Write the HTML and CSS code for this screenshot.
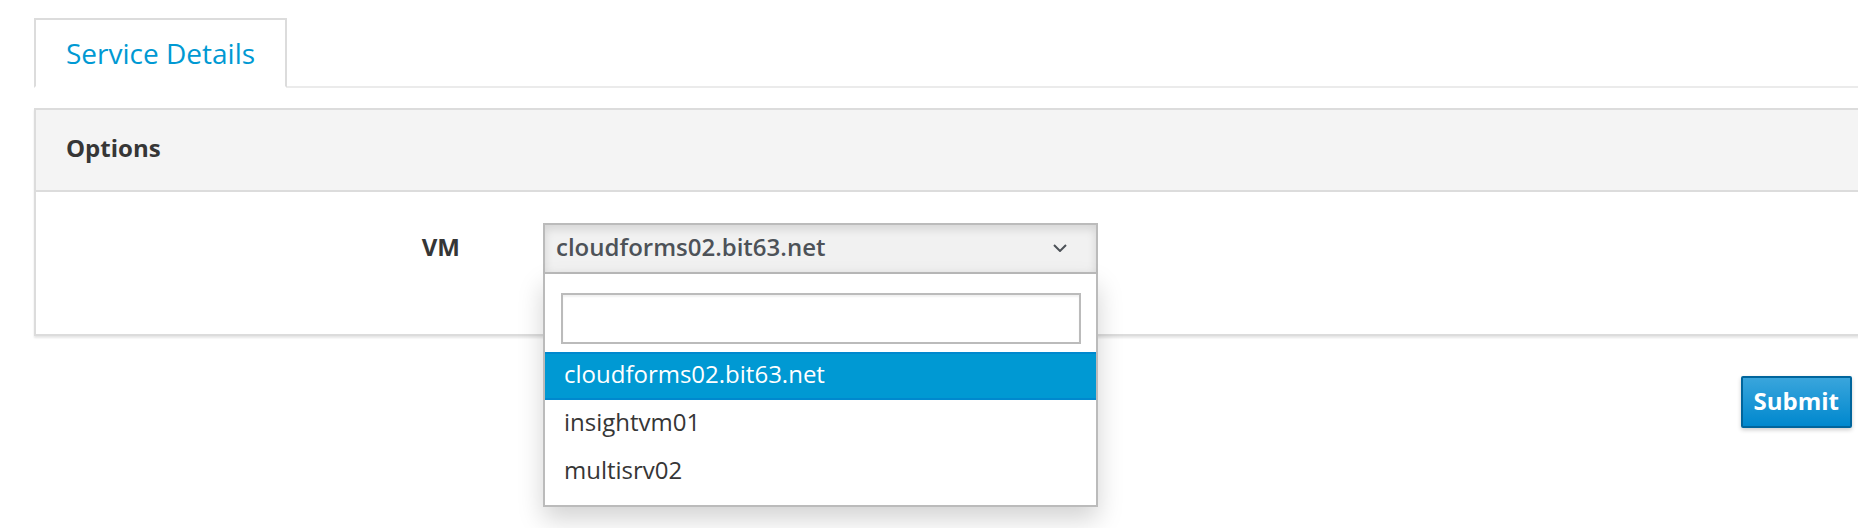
FILE: index.html
```html
<!DOCTYPE html>
<html lang="en">
<head>
<meta charset="utf-8">
<title>Service Details</title>
<link rel="stylesheet" href="styles.css">
</head>
<body>
<div class="page">
  <ul class="tabs">
    <li class="tab active"><a href="#">Service Details</a></li>
  </ul>

  <div class="panel">
    <div class="panel-heading"><h3 class="panel-title">Options</h3></div>
    <div class="panel-body">
      <div class="form-row">
        <label class="form-label">VM</label>
        <div class="select open">
          <button class="select-toggle" type="button">
            <span class="select-value">cloudforms02.bit63.net</span>
            <svg class="chevron" width="14" height="8" viewBox="0 0 14 8"><path d="M1 1 L7 7 L13 1" fill="none" stroke="#4d5258" stroke-width="2"/></svg>
          </button>
          <div class="select-menu">
            <div class="select-search"><input type="text" class="search-input"></div>
            <ul class="select-options">
              <li class="option selected">cloudforms02.bit63.net</li>
              <li class="option">insightvm01</li>
              <li class="option">multisrv02</li>
            </ul>
          </div>
        </div>
      </div>
    </div>
  </div>

  <div class="actions">
    <button class="btn-primary" type="button">Submit</button>
  </div>
</div>
</body>
</html>
```

FILE: styles.css
```css
html {
  overflow: hidden;
  background: #fff;
}

body {
  margin: 0;
  padding: 0;
  min-height: 528px;
  font-family: "Open Sans", "Liberation Sans", sans-serif;
  color: #363636;
  font-size: 24px;
}

.page {
  padding: 18px 0 0 34px;
}

/* Tabs */
.tabs {
  list-style: none;
  margin: 0 -40px 0 0;
  padding: 0;
  display: flex;
  border-bottom: 2px solid #ebebeb;
}

.tab {
  margin-bottom: -2px;
}

.tab a {
  display: block;
  padding: 13px 30px 13px 30px;
  font-size: 28px;
  line-height: 40px;
  color: #0099d3;
  text-decoration: none;
  border: 2px solid #dcdcdc;
  border-bottom-color: #fff;
  background: #fff;
}

/* Panel */
.panel {
  margin: 20px -40px 0 0;
  border: 2px solid #dcdcdc;
  background: #fff;
  box-shadow: 0 2px 2px rgba(3, 3, 3, 0.1);
}

.panel-heading {
  background: #f4f4f4;
  border-bottom: 2px solid #dcdcdc;
  padding: 22px 30px 26px;
}

.panel-title {
  margin: 0;
  font-size: 24px;
  line-height: 32px;
  font-weight: 700;
  color: #363636;
}

.panel-body {
  padding: 31px 0 60px;
}

.form-row {
  display: flex;
  align-items: baseline;
}

.form-label {
  width: 424px;
  margin-right: 83px;
  text-align: right;
  font-weight: 700;
  line-height: 32px;
  color: #363636;
}

/* Select */
.select {
  position: relative;
  width: 555px;
}

.select-toggle {
  display: flex;
  align-items: center;
  justify-content: space-between;
  width: 100%;
  box-sizing: border-box;
  margin: 0;
  padding: 6px 29px 9px 11px;
  border: 2px solid #bbb;
  background: #f1f1f1;
  box-shadow: inset 0 4px 10px rgba(3, 3, 3, 0.12);
  font-family: inherit;
  font-size: 24px;
  font-weight: 600;
  line-height: 32px;
  color: #4d5258;
  text-align: left;
}

.chevron {
  display: block;
  margin-top: 2px;
}

.select-menu {
  position: absolute;
  top: 100%;
  left: 0;
  right: 0;
  background: #fff;
  border: 2px solid #bbb;
  border-top: 0;
  padding-bottom: 9px;
  box-shadow: 0 12px 24px rgba(0, 0, 0, 0.175);
  z-index: 10;
}

.select-search {
  padding: 19px 15px 8px 16px;
}

.search-input {
  display: block;
  width: 100%;
  height: 51px;
  box-sizing: border-box;
  margin: 0;
  border: 2px solid #bbb;
  background: #fff;
  box-shadow: inset 0 2px 2px rgba(3, 3, 3, 0.06);
  font-family: inherit;
  font-size: 24px;
  outline: none;
}

.select-options {
  list-style: none;
  margin: 0;
  padding: 0;
}

.option {
  padding: 6px 19px 10px;
  line-height: 32px;
  font-size: 24px;
  color: #363636;
}

.option.selected {
  background: #0099d3;
  color: #fff;
  border-top: 2px solid #0088ce;
  border-bottom: 2px solid #0088ce;
  padding: 4px 19px 8px;
}

/* Actions */
.actions {
  display: flex;
  justify-content: flex-end;
  padding-right: 6px;
  margin-top: 40px;
}

.btn-primary {
  margin: 0;
  padding: 7px 11px 9px 11px;
  border: 2px solid #00659c;
  border-radius: 2px;
  background: linear-gradient(#39a5dc, #0088ce);
  box-shadow: 0 2px 4px rgba(3, 3, 3, 0.2);
  font-family: inherit;
  font-size: 24px;
  font-weight: 700;
  line-height: 32px;
  color: #fff;
}
```
